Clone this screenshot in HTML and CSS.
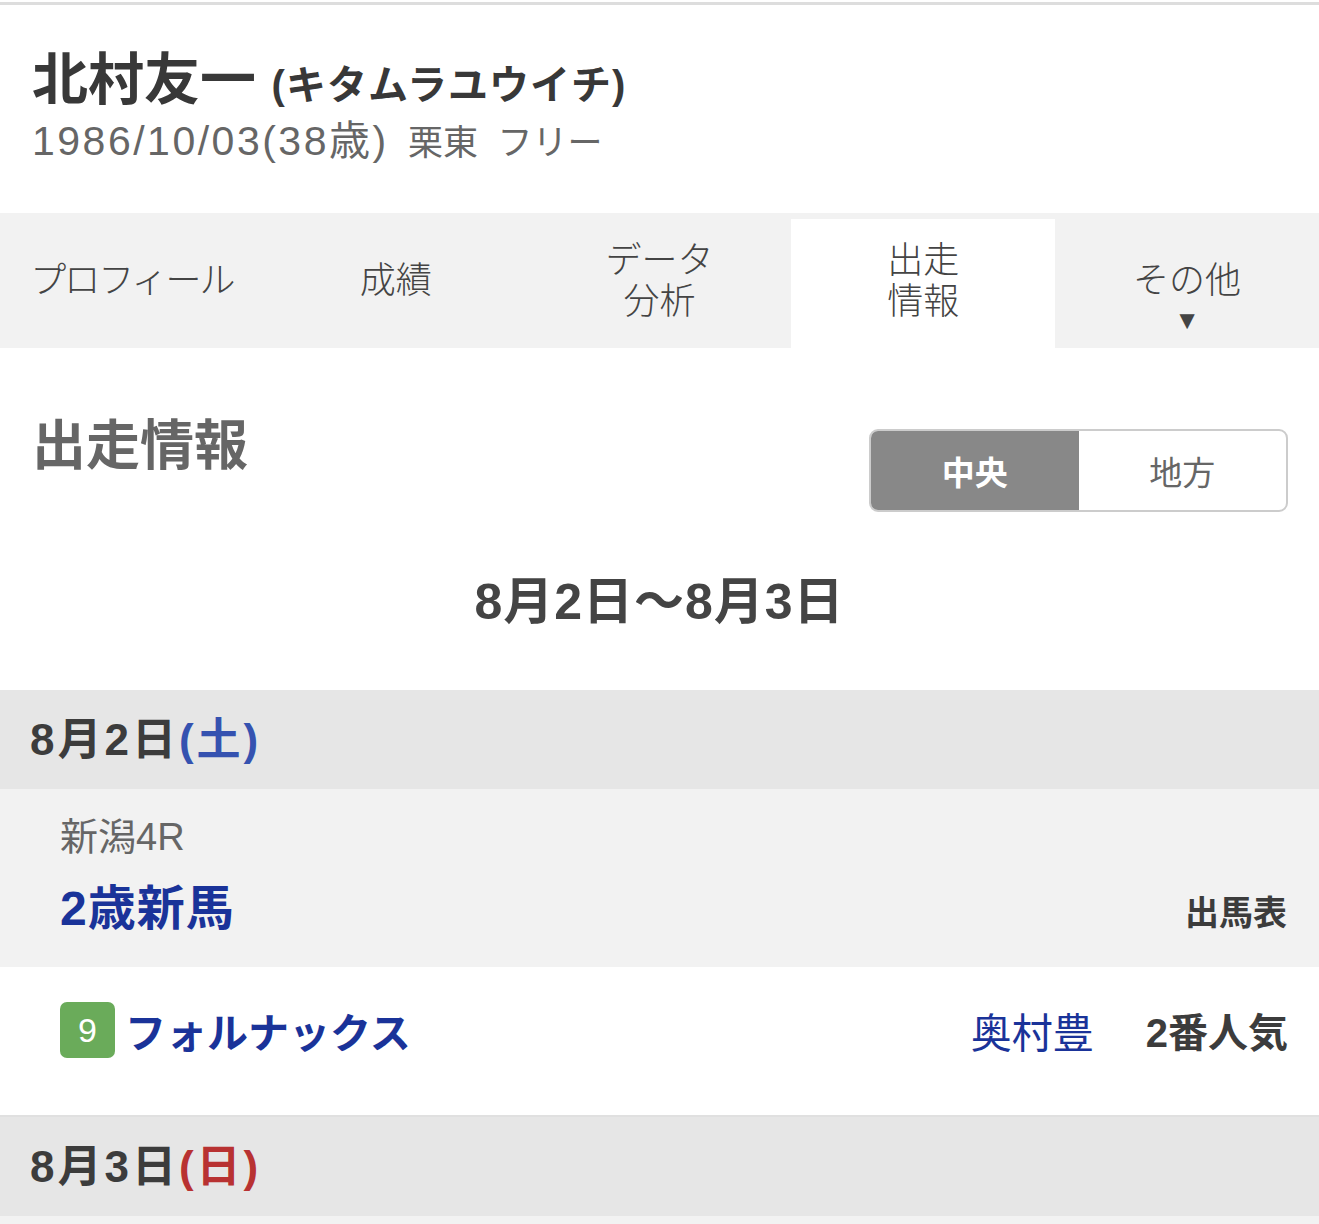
FILE: index.html
```html
<!DOCTYPE html>
<html lang="ja">
<head>
  <meta charset="UTF-8" />
  <meta name="viewport" content="width=device-width, initial-scale=1" />
  <title>北村友一 出走情報</title>
  <link rel="stylesheet" href="styles.css">
</head>
<body>
  <div class="topline"></div>

  <div class="jockey-head">
    <h1 class="jockey-name">北村友一 <span class="kana">(キタムラユウイチ)</span></h1>
    <p class="jockey-info"><span class="birth">1986/10/03(38歳)</span>&nbsp;&nbsp;栗東&nbsp;&nbsp;フリー</p>
  </div>

  <nav class="tabs">
    <div class="tab narrow">プロフィール</div>
    <div class="tab">成績</div>
    <div class="tab">データ<br>分析</div>
    <div class="tab active">出走<br>情報</div>
    <div class="tab more">その他<span class="arrow">▼</span></div>
  </nav>

  <div class="section-head">
    <h2 class="section-title">出走情報</h2>
    <div class="switch">
      <div class="switch-item on">中央</div>
      <div class="switch-item">地方</div>
    </div>
  </div>

  <div class="period">8月2日〜8月3日</div>

  <div class="day-head">8月2日<span class="sat">(土)</span></div>

  <div class="race">
    <div class="race-place">新潟4R</div>
    <div class="race-line">
      <span class="race-name">2歳新馬</span>
      <span class="race-link">出馬表</span>
    </div>
  </div>

  <div class="horse-row">
    <div class="horse">
      <span class="num">9</span>
      <span class="horse-name">フォルナックス</span>
    </div>
    <div class="horse-side">
      <span class="trainer">奥村豊</span>
      <span class="pop">2番人気</span>
    </div>
  </div>

  <div class="day-head">8月3日<span class="sun">(日)</span></div>
  <div class="race short"></div>
</body>
</html>
```

FILE: styles.css
```css
html, body {
  margin: 0;
  padding: 0;
  font-family: "Liberation Sans", "Noto Sans CJK JP", sans-serif;
  color: #444;
  background: #fff;
}

.topline {
  height: 3px;
  margin-top: 2px;
  background-color: #dddddd;
}

.jockey-head {
  padding: 43px 32px 44px;
}

.jockey-name {
  margin: 0;
  font-size: 56px;
  line-height: 64px;
  font-weight: bold;
  color: #383838;
}

.kana {
  font-size: 40px;
  letter-spacing: 1px;
}

.jockey-info {
  margin: 0;
  height: 52px;
  font-size: 35px;
  line-height: 52px;
  color: #666;
}

.birth {
  font-size: 41px;
  line-height: 1;
  letter-spacing: 2.5px;
}

.tabs {
  display: grid;
  grid-template-columns: repeat(5, 1fr);
  background-color: #f2f2f2;
  height: 135px;
}

.tab {
  display: flex;
  flex-direction: column;
  justify-content: center;
  align-items: center;
  text-align: center;
  font-size: 36px;
  line-height: 41px;
  font-weight: 300;
  color: #444;
}

.tab.narrow {
  letter-spacing: -2px;
}

.tab.active {
  background-color: #fff;
  margin-top: 6px;
  padding-bottom: 6px;
}

.tab.more {
  padding-top: 38px;
}

.arrow {
  font-size: 26px;
  line-height: 38px;
}

.section-head {
  display: flex;
  justify-content: space-between;
  align-items: flex-start;
  padding: 66px 31px 0 32px;
}

.section-title {
  margin: 0;
  font-size: 54px;
  line-height: 64px;
  font-weight: bold;
  color: #666;
}

.switch {
  display: flex;
  width: 415px;
  height: 79px;
  margin-top: 15px;
  border: 2px solid #cccccc;
  border-radius: 9px;
  overflow: hidden;
}

.switch-item {
  flex: 1;
  display: flex;
  justify-content: center;
  align-items: center;
  font-size: 33px;
  color: #666;
}

.switch-item.on {
  background-color: #888;
  color: #fff;
  font-weight: bold;
}

.period {
  text-align: center;
  padding: 62px 0 60px 0;
  font-size: 50px;
  line-height: 56px;
  letter-spacing: 1px;
  font-weight: bold;
  color: #444;
}

.day-head {
  background-color: #e6e6e6;
  height: 99px;
  line-height: 99px;
  padding-left: 30px;
  font-size: 44px;
  letter-spacing: 3px;
  font-weight: bold;
  color: #3c3c3c;
}

.sat {
  color: #3552b0;
}

.sun {
  color: #b83232;
}

.race {
  background-color: #f2f2f2;
  padding: 22px 32px 26px 60px;
}

.race.short {
  height: 11px;
  padding: 0;
}

.race-place {
  font-size: 38px;
  line-height: 52px;
  color: #666;
}

.race-line {
  display: flex;
  justify-content: space-between;
  align-items: baseline;
  margin-top: 14px;
}

.race-name {
  font-size: 48px;
  line-height: 64px;
  letter-spacing: 1px;
  font-weight: bold;
  color: #1a3399;
}

.race-link {
  font-size: 34px;
  font-weight: bold;
  color: #3c3c3c;
}

.horse-row {
  display: flex;
  justify-content: space-between;
  align-items: center;
  height: 150px;
  padding: 0 31px 22px 60px;
  box-sizing: border-box;
  border-bottom: 2px solid #e0e0e0;
}

.horse {
  display: flex;
  align-items: center;
  gap: 10px;
}

.num {
  display: flex;
  justify-content: center;
  align-items: center;
  width: 55px;
  height: 56px;
  border-radius: 7px;
  background-color: #6aab5a;
  color: #fff;
  font-size: 34px;
  font-weight: 300;
}

.horse-name {
  font-size: 41px;
  font-weight: bold;
  color: #1a3399;
}

.horse-side {
  display: flex;
  align-items: center;
  gap: 52px;
}

.trainer {
  font-size: 41px;
  color: #1a3399;
}

.pop {
  font-size: 40px;
  font-weight: bold;
  color: #3c3c3c;
}
```
